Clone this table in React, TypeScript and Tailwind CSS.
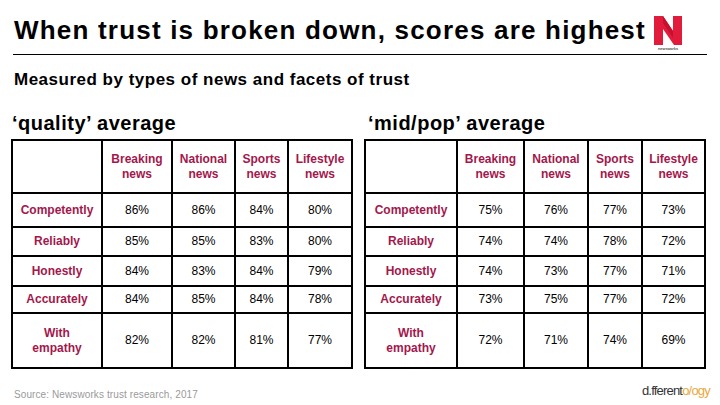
const cols = ["Breaking news", "National news", "Sports news", "Lifestyle news"];

const quality = [
  { label: "Competently", v: ["86%", "86%", "84%", "80%"], h: "h-[34px]" },
  { label: "Reliably", v: ["85%", "85%", "83%", "80%"], h: "h-[29px]" },
  { label: "Honestly", v: ["84%", "83%", "84%", "79%"], h: "h-[30px]" },
  { label: "Accurately", v: ["84%", "85%", "84%", "78%"], h: "h-[27px]" },
  { label: "With empathy", v: ["82%", "82%", "81%", "77%"], h: "h-[55px]" },
];

const midpop = [
  { label: "Competently", v: ["75%", "76%", "77%", "73%"], h: "h-[34px]" },
  { label: "Reliably", v: ["74%", "74%", "78%", "72%"], h: "h-[29px]" },
  { label: "Honestly", v: ["74%", "73%", "77%", "71%"], h: "h-[30px]" },
  { label: "Accurately", v: ["73%", "75%", "77%", "72%"], h: "h-[27px]" },
  { label: "With empathy", v: ["72%", "71%", "74%", "69%"], h: "h-[55px]" },
];

interface TableProps {
  rows: { label: string; v: string[]; h: string }[];
  widths: string[];
}

function TrustTable({ rows, widths }: TableProps) {
  return (
    <table className="table-fixed border-collapse border-2 border-black text-[12px] leading-[15px]">
      <colgroup>
        {widths.map((w, i) => (
          <col key={i} className={w} />
        ))}
      </colgroup>
      <tbody>
        <tr className="h-[53px]">
          <td className="border-2 border-black" />
          {cols.map((c) => (
            <td key={c} className="border-2 border-black px-1 text-center font-bold text-[#a3174b]">
              {c.split(" ").map((w) => (
                <div key={w}>{w}</div>
              ))}
            </td>
          ))}
        </tr>
        {rows.map((r) => (
          <tr key={r.label} className={r.h}>
            <td className="border-2 border-black px-1 text-center font-bold text-[#a3174b]">
              {r.label === "With empathy" ? (
                <>
                  <div>With</div>
                  <div>empathy</div>
                </>
              ) : (
                r.label
              )}
            </td>
            {r.v.map((v, i) => (
              <td key={i} className="border-2 border-black text-center text-black">
                {v}
              </td>
            ))}
          </tr>
        ))}
      </tbody>
    </table>
  );
}

function NewsworksLogo() {
  return (
    <div className="flex flex-col items-center">
      <svg width="28" height="29" viewBox="0 0 28 29">
        <polygon points="0,0 9,0 19,15 19,0 28,0 28,29 20,29 9,13 9,29 0,29" fill="#e11b3c" />
        <polygon points="9,0 19,15 19,22 9,7" fill="#c8102e" />
      </svg>
      <span className="mt-[1px] text-[4px] leading-[5px] text-black">newsworks</span>
    </div>
  );
}

export default function App() {
  return (
    <div className="relative flex h-[405px] w-[720px] flex-col overflow-hidden bg-white font-['Liberation_Sans',Arial,sans-serif] text-black">
      {/* Titulo */}
      <div className="flex items-start pl-[14px] pt-[14px]">
        <h1 className="mt-[1px] shrink-0 whitespace-nowrap text-[26px] font-bold leading-[31px] tracking-[1.2px]">
          When trust is broken down, scores are highest
        </h1>
        <div className="ml-auto pr-[38px] pt-[2px]">
          <NewsworksLogo />
        </div>
      </div>
      <div className="mx-[13px] mt-[3px] h-px bg-black" />

      <p className="ml-[14px] mt-[14px] text-[17px] font-bold leading-[21px] tracking-[0.5px]">
        Measured by types of news and facets of trust
      </p>

      <div className="mt-[22px] flex pl-[11px]">
        <div className="flex w-[353px] flex-col">
          <h2 className="ml-[1px] text-[20px] font-bold leading-[23px] tracking-[0.5px]">‘quality’ average</h2>
          <div className="mt-[4px]">
            <TrustTable rows={quality} widths={["w-[90px]", "w-[70px]", "w-[63px]", "w-[53px]", "w-[64px]"]} />
          </div>
        </div>
        <div className="flex flex-col">
          <h2 className="ml-[4px] text-[20px] font-bold leading-[23px] tracking-[0.5px]">‘mid/pop’ average</h2>
          <div className="mt-[4px]">
            <TrustTable rows={midpop} widths={["w-[92px]", "w-[67px]", "w-[64px]", "w-[54px]", "w-[63px]"]} />
          </div>
        </div>
      </div>

      <div className="mt-auto flex items-end justify-between pb-[6px] pl-[14px] pr-[10px]">
        <span className="mb-[-2px] text-[10px] leading-[12px] tracking-[0.1px] text-[#9a9a9a]">
          Source: Newsworks trust research, 2017
        </span>
        <span className="text-[13px] leading-[16px] tracking-[-0.8px]">
          <span className="text-[#333]">d.fferent</span>
          <span className="text-[#e9a93c]">o/ogy</span>
        </span>
      </div>
    </div>
  );
}
